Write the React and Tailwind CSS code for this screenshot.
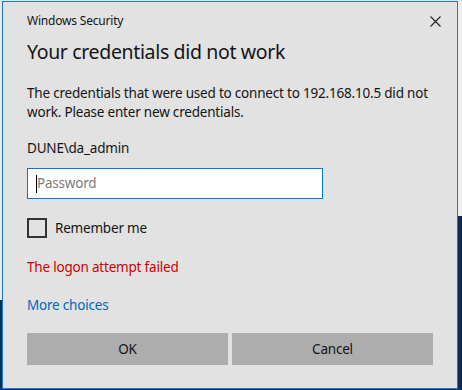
const font = { fontFamily: '"Segoe UI", "Noto Sans", Arial, sans-serif' }

function CloseIcon() {
  return (
    <svg width="11" height="11" viewBox="0 0 11 11" className="mr-[-8px]">
      <path d="M0.5 0.5 L10.5 10.5 M10.5 0.5 L0.5 10.5" stroke="#222" strokeWidth="1.1" fill="none" />
    </svg>
  )
}

export default function App() {
  return (
    <div
      className="w-[462px] h-[390px] flex bg-[#0b2d5c] text-[#141414] overflow-hidden"
      style={font}
    >
      <div className="w-[2px] flex flex-col">
        <div className="h-[300px] bg-[#e8e8e8]" />
      </div>
      <div className="w-[456px] h-[389px] flex flex-col">
        <div className="h-px bg-[#e8e8e8]" />
        <div className="flex-1 border border-[#1a78d0] bg-[#e2e2e2] flex flex-col pl-[24px] pr-[24px] text-[13.5px] tracking-[-0.2px]">
          <div className="h-[38px] flex items-center justify-between">
            <span className="text-[12px] tracking-[-0.2px]">Windows Security</span>
            <CloseIcon />
          </div>
          <h1 className="text-[19.5px] leading-[26px] mt-[-1px] tracking-[-0.35px]">Your credentials did not work</h1>
          <p className="leading-[19px] mt-[19px]">
            The credentials that were used to connect to 192.168.10.5 did not work. Please enter new credentials.
          </p>
          <p className="leading-[19px] mt-[17px]">DUNE\da_admin</p>
          <div className="mt-[10px] w-[296px] h-[31px] border border-[#0078d7] bg-white flex items-center pl-[8px]">
            <span className="w-px h-[18px] bg-black" />
            <span className="text-[#7a7a7a]">Password</span>
          </div>
          <label className="mt-[19px] flex items-center gap-[8px]">
            <span className="w-[20px] h-[20px] border-2 border-[#333]" />
            <span>Remember me</span>
          </label>
          <p className="mt-[20px] leading-[19px] text-[#d00000]">The logon attempt failed</p>
          <p className="mt-[19px] leading-[19px] text-[#0067c0]">More choices</p>
          <div className="mt-[18px] flex gap-[4px]">
            <button className="w-[201px] h-[32px] bg-[#adadad]">OK</button>
            <button className="w-[201px] h-[32px] bg-[#adadad]">Cancel</button>
          </div>
        </div>
      </div>
      <div className="w-[4px] flex flex-col">
        <div className="h-[216px] bg-[#ececec]" />
      </div>
    </div>
  )
}
